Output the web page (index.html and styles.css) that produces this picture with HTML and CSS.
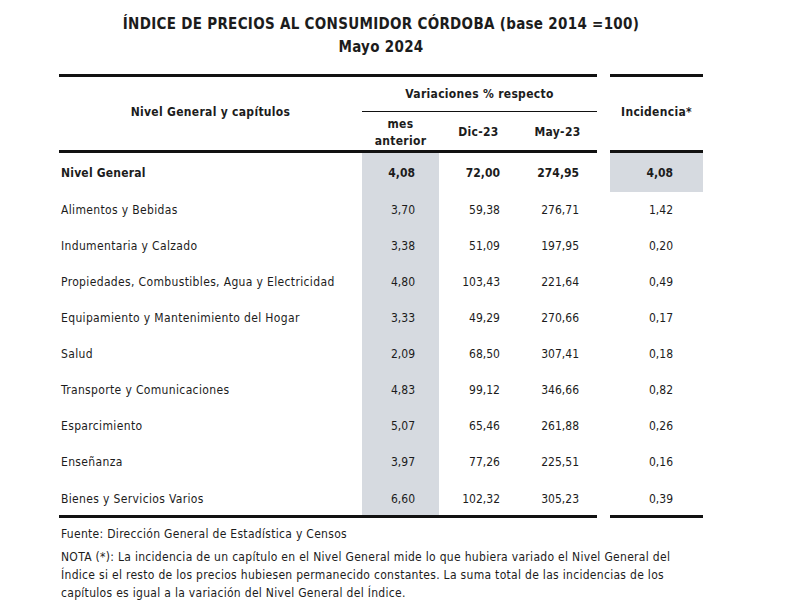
FILE: index.html
```html
<!DOCTYPE html>
<html lang="es">
<head>
<meta charset="utf-8">
<title>IPC Córdoba</title>
<link rel="stylesheet" href="styles.css">
</head>
<body>
<div class="page">
  <h1 class="title">ÍNDICE DE PRECIOS AL CONSUMIDOR CÓRDOBA (base 2014 =100)</h1>
  <h2 class="subtitle">Mayo 2024</h2>
  <table class="ipc">
    <colgroup>
      <col class="c-label">
      <col class="c-mes">
      <col class="c-dic">
      <col class="c-may">
      <col class="c-gap">
      <col class="c-inc">
    </colgroup>
    <thead>
      <tr class="h1">
        <th class="label-h" rowspan="2">Nivel General y capítulos</th>
        <th class="var-h" colspan="3">Variaciones % respecto</th>
        <th class="gap" rowspan="2"></th>
        <th class="inc-h" rowspan="2">Incidencia*</th>
      </tr>
      <tr class="h2">
        <th class="sub">mes<br>anterior</th>
        <th class="sub">Dic-23</th>
        <th class="sub">May-23</th>
      </tr>
    </thead>
    <tbody>
      <tr class="total">
        <td class="lbl">Nivel General</td>
        <td class="num mes">4,08</td>
        <td class="num dic">72,00</td>
        <td class="num may">274,95</td>
        <td class="gap"></td>
        <td class="num inc shade">4,08</td>
      </tr>
      <tr><td class="lbl">Alimentos y Bebidas</td><td class="num mes">3,70</td><td class="num dic">59,38</td><td class="num may">276,71</td><td class="gap"></td><td class="num inc">1,42</td></tr>
      <tr><td class="lbl">Indumentaria y Calzado</td><td class="num mes">3,38</td><td class="num dic">51,09</td><td class="num may">197,95</td><td class="gap"></td><td class="num inc">0,20</td></tr>
      <tr><td class="lbl">Propiedades, Combustibles, Agua y Electricidad</td><td class="num mes">4,80</td><td class="num dic">103,43</td><td class="num may">221,64</td><td class="gap"></td><td class="num inc">0,49</td></tr>
      <tr><td class="lbl">Equipamiento y Mantenimiento del Hogar</td><td class="num mes">3,33</td><td class="num dic">49,29</td><td class="num may">270,66</td><td class="gap"></td><td class="num inc">0,17</td></tr>
      <tr><td class="lbl">Salud</td><td class="num mes">2,09</td><td class="num dic">68,50</td><td class="num may">307,41</td><td class="gap"></td><td class="num inc">0,18</td></tr>
      <tr><td class="lbl">Transporte y Comunicaciones</td><td class="num mes">4,83</td><td class="num dic">99,12</td><td class="num may">346,66</td><td class="gap"></td><td class="num inc">0,82</td></tr>
      <tr><td class="lbl">Esparcimiento</td><td class="num mes">5,07</td><td class="num dic">65,46</td><td class="num may">261,88</td><td class="gap"></td><td class="num inc">0,26</td></tr>
      <tr><td class="lbl">Enseñanza</td><td class="num mes">3,97</td><td class="num dic">77,26</td><td class="num may">225,51</td><td class="gap"></td><td class="num inc">0,16</td></tr>
      <tr class="last"><td class="lbl">Bienes y Servicios Varios</td><td class="num mes">6,60</td><td class="num dic">102,32</td><td class="num may">305,23</td><td class="gap"></td><td class="num inc">0,39</td></tr>
    </tbody>
  </table>
  <p class="source">Fuente: Dirección General de Estadística y Censos</p>
  <p class="note">NOTA (*): La incidencia de un capítulo en el Nivel General mide lo que hubiera variado el Nivel General del<br>Índice si el resto de los precios hubiesen permanecido constantes. La suma total de las incidencias de los<br>capítulos es igual a la variación del Nivel General del Índice.</p>
</div>
</body>
</html>
```
FILE: styles.css
```css
html, body {
  margin: 0;
  padding: 0;
  background: #ffffff;
}
body {
  font-family: "DejaVu Sans Condensed", "DejaVu Sans", sans-serif;
  font-stretch: condensed;
  color: #1c1c1c;
  font-size: 12px;
}
.page {
  width: 644px;
  margin-left: 59px;
  padding-top: 14px;
}
.title {
  margin: 0;
  text-align: center;
  font-size: 15px;
  font-weight: bold;
  line-height: 20px;
  letter-spacing: 0.3px;
}
.subtitle {
  margin: 3px 0 0 0;
  text-align: center;
  font-size: 15px;
  font-weight: bold;
  line-height: 20px;
  letter-spacing: 0.3px;
}
.ipc {
  border-collapse: collapse;
  table-layout: fixed;
  width: 644px;
  margin-top: 17px;
}
.c-label { width: 303px; }
.c-mes { width: 77px; }
.c-dic { width: 79px; }
.c-may { width: 79px; }
.c-gap { width: 13px; }
.c-inc { width: 93px; }

.ipc th, .ipc td {
  padding: 0;
}
.ipc th {
  font-weight: bold;
  font-size: 12px;
  letter-spacing: 0.3px;
}
.h1 th {
  border-top: 3px solid #111;
  height: 34px;
}
.h1 th.gap {
  border-top: none;
}
.label-h, .inc-h {
  border-bottom: 3px solid #111;
  vertical-align: middle;
  padding-bottom: 3px !important;
}
.var-h {
  border-bottom: 1px solid #111;
  vertical-align: middle;
}
.h2 th.sub {
  border-bottom: 3px solid #111;
  height: 35px;
  line-height: 17px;
  padding-top: 3px;
}
.ipc .gap {
  border: none !important;
  background: transparent;
}
.ipc td {
  height: 36px;
  vertical-align: middle;
}
.lbl {
  text-align: left;
  padding-left: 2px !important;
  letter-spacing: 0.35px;
}
.total td {
  height: 39px;
  font-weight: bold;
}
.total .lbl {
  letter-spacing: 0.2px;
}
.num {
  text-align: right;
}
.mes {
  background: #d6dae0;
  padding-right: 24px !important;
}
.dic {
  padding-right: 18px !important;
}
.may {
  padding-right: 18px !important;
}
.inc {
  padding-right: 30px !important;
}
.shade {
  background: #d6dae0;
}
.last td {
  height: 32px;
  padding-top: 3px;
  border-bottom: 3px solid #111;
}
.last td.gap {
  border-bottom: none;
}
.source {
  margin: 8px 0 0 2px;
  font-size: 12px;
  line-height: 16px;
  letter-spacing: 0.3px;
}
.note {
  margin: 6px 0 0 2px;
  font-size: 12px;
  line-height: 18px;
  letter-spacing: 0.3px;
  white-space: nowrap;
}
```
